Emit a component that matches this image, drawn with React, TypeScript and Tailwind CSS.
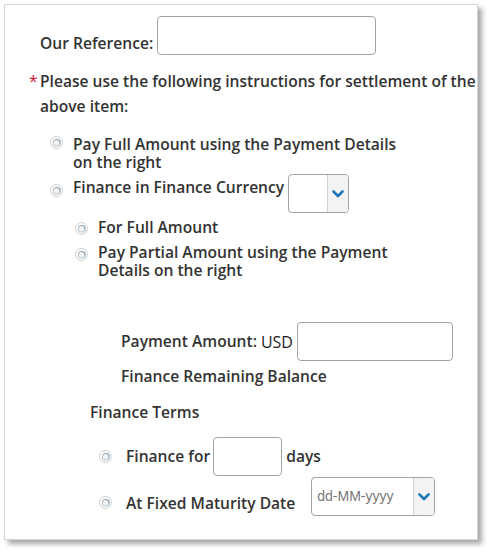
import React from 'react';

const Radio: React.FC<{ className?: string }> = ({ className = '' }) => (
  <span
    className={`flex items-center justify-center w-[13px] h-[13px] shrink-0 rounded-full border border-[#d2d2d2] bg-[#fafafa] ${className}`}
  >
    <span className="flex items-center justify-center w-[8px] h-[8px] rounded-full bg-[linear-gradient(180deg,#8ea3b3,#dfe6eb)]">
      <span className="block w-[5px] h-[5px] rounded-full bg-[#f4f6f8]" />
    </span>
  </span>
);

const Chevron: React.FC = () => (
  <svg width="12" height="8" viewBox="0 0 12 8" className="block">
    <polyline points="1.5,1.5 6,6 10.5,1.5" fill="none" stroke="#1e78b8" strokeWidth="2.6" strokeLinecap="round" strokeLinejoin="round" />
  </svg>
);

const SelectBox: React.FC<{ w: string; placeholder?: string }> = ({ w, placeholder }) => (
  <div className={`flex h-[39px] ${w} shrink-0 rounded-[4px] border border-[#a3a3a3] bg-white overflow-hidden`}>
    <div className="flex-1 pl-[5px] pt-[9px] text-[14px] leading-[18px] text-[#777] font-['Liberation_Sans',Arial,sans-serif] font-normal">
      {placeholder}
    </div>
    <div className="w-[21px] flex items-center justify-center border-l border-[#d0d0d0] bg-[#f3f3f3]">
      <Chevron />
    </div>
  </div>
);

const TextBox: React.FC<{ w: string }> = ({ w }) => (
  <div className={`h-[39px] ${w} shrink-0 rounded-[4px] border border-[#a3a3a3] bg-white`} />
);

export default function App() {
  return (
    <div className="w-[490px] h-[552px] bg-white pl-[4px] pt-[4px] font-['Open_Sans',sans-serif] font-semibold text-[15.6px] text-[#333]">
      <div className="w-[474px] h-[536px] border border-[#d6d6d6] bg-white shadow-[4px_4px_5px_rgba(0,0,0,0.35)] pt-[11px]">
        {/* Our Reference */}
        <div className="flex items-end pl-[35px]">
          <span className="leading-[20px] mb-[2px] whitespace-nowrap">Our Reference:</span>
          <TextBox w="w-[219px] ml-[4px]" />
        </div>

        {/* Instructions */}
        <div className="flex pl-[24px] mt-[14px] leading-[25px]">
          <span className="w-[11px] text-[#d9183b] font-normal">*</span>
          <span className="whitespace-nowrap">
            Please use the following instructions for settlement of the
            <br />
            above item:
          </span>
        </div>

        {/* Pay full */}
        <div className="flex items-start pl-[45px] mt-[16px] leading-[18px]">
          <Radio className="mt-[1px]" />
          <span className="ml-[10px] whitespace-nowrap">
            Pay Full Amount using the Payment Details
            <br />
            on the right
          </span>
        </div>

        {/* Finance in currency */}
        <div className="flex items-start pl-[45px] mt-[3px] leading-[18px]">
          <Radio className="mt-[10px]" />
          <span className="ml-[10px] mt-[4px] whitespace-nowrap">Finance in Finance Currency</span>
          <SelectBox w="w-[61px] ml-[4px]" />
        </div>

        {/* For full amount */}
        <div className="flex items-start pl-[70px] mt-[5px] leading-[18px]">
          <Radio className="mt-[4px]" />
          <span className="ml-[10px] whitespace-nowrap">For Full Amount</span>
        </div>

        {/* Pay partial */}
        <div className="flex items-start pl-[70px] mt-[7px] leading-[18px]">
          <Radio className="mt-[5px]" />
          <span className="ml-[10px] whitespace-nowrap">
            Pay Partial Amount using the Payment
            <br />
            Details on the right
          </span>
        </div>

        {/* Payment amount */}
        <div className="flex items-center pl-[116px] mt-[43px]">
          <span className="whitespace-nowrap">Payment Amount:</span>
          <span className="ml-[4px] font-normal text-[16px] text-[#222]">USD</span>
          <TextBox w="w-[156px] ml-[4px]" />
        </div>

        <div className="pl-[116px] mt-[6px] leading-[18px]">Finance Remaining Balance</div>

        <div className="pl-[85px] mt-[18px] leading-[18px]">Finance Terms</div>

        {/* Finance for */}
        <div className="flex items-center pl-[94px] mt-[16px]">
          <Radio />
          <span className="ml-[14px] whitespace-nowrap">Finance for</span>
          <TextBox w="w-[69px] ml-[3px]" />
          <span className="ml-[4px]">days</span>
        </div>

        {/* Fixed maturity */}
        <div className="flex items-start pl-[94px] mt-[1px] leading-[18px]">
          <Radio className="mt-[19px]" />
          <span className="ml-[14px] mt-[17px] whitespace-nowrap">At Fixed Maturity Date</span>
          <SelectBox w="w-[124px] ml-[16px]" placeholder="dd-MM-yyyy" />
        </div>
      </div>
    </div>
  );
}
